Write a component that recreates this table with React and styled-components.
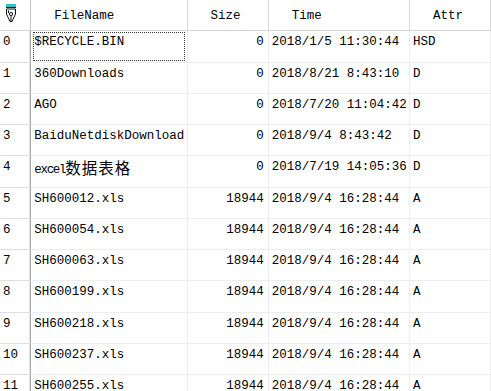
import React from "react";
import styled, { createGlobalStyle } from "styled-components";

const Global = createGlobalStyle`
  html, body { margin: 0; padding: 0; background: #ffffff; overflow: hidden; }
  * { box-sizing: border-box; }
`;

const Viewport = styled.div`
  width: 491px;
  height: 391px;
  overflow: hidden;
  background: #ffffff;
`;

const Grid = styled.div`
  display: grid;
  grid-template-columns: 31.25px 156.25px 81.25px 141.25px 81.25px;
  grid-auto-rows: 31.25px;
  width: 491.25px;
  font-family: "Liberation Mono", "Courier New", monospace;
  font-size: 12.5px;
  line-height: 15px;
  color: #000000;
`;

const HeadCell = styled.div`
  display: flex;
  align-items: flex-start;
  padding: 9px 0 0 ${(p) => (p.$corner ? 0 : 23)}px;
  border-right: 1px solid ${(p) => (p.$corner ? "#c4c4c4" : "#d6d6d6")};
  border-bottom: 1px solid #d2d2d2;
  white-space: nowrap;
  overflow: hidden;
`;

const CornerIcon = styled.div`
  padding: 0 0 0 5px;
  margin-top: -5px;
`;

const RowHead = styled.div`
  padding: 4px 0 0 3px;
  border-right: 1px solid #a8a8a8;
  box-shadow: inset -1px 0 0 #e2e2e2;
  border-bottom: 1px solid #dedede;
  white-space: nowrap;
`;

const Cell = styled.div`
  position: relative;
  padding: 4px 3px 0 3px;
  text-align: ${(p) => (p.$right ? "right" : "left")};
  padding-right: ${(p) => (p.$right ? 4 : 3)}px;
  border-right: 1px solid #ededed;
  border-bottom: 1px solid #ededed;
  white-space: nowrap;
  overflow: hidden;
  ${(p) =>
    p.$focused &&
    `
    &::after {
      content: "";
      position: absolute;
      left: 2px;
      top: 1px;
      right: 2px;
      bottom: 1px;
      border: 1px dotted #3a3a3a;
    }
  `}
`;

const Narrow = styled.span`
  letter-spacing: -1.3px;
`;

const Cjk = styled.span`
  font-family: "Noto Sans CJK SC", sans-serif;
  font-size: 15.5px;
  letter-spacing: 1px;
  vertical-align: -1px;
`;

const PenIcon = () => (
  <svg width="12" height="19" viewBox="0 0 12 19">
    <rect x="1" y="0" width="10" height="3" fill="#2fc4c8" />
    <rect x="1" y="3" width="10" height="1" fill="#111" />
    <path
      d="M1.5 5 L10.5 5 L10.5 10 L7 17.5 L5 17.5 L1.5 10 Z"
      fill="#fff"
      stroke="#111"
      strokeWidth="1"
    />
    <circle cx="6" cy="10" r="1.6" fill="none" stroke="#111" strokeWidth="1" />
    <path d="M6 11.6 L6 17" stroke="#111" strokeWidth="1" />
    <path d="M3.5 6.5 L3.5 9" stroke="#111" strokeWidth="1" />
  </svg>
);

const rows = [
  ["$RECYCLE.BIN", "0", "2018/1/5 11:30:44", "HSD"],
  ["360Downloads", "0", "2018/8/21 8:43:10", "D"],
  ["AGO", "0", "2018/7/20 11:04:42", "D"],
  ["BaiduNetdiskDownload", "0", "2018/9/4 8:43:42", "D"],
  ["excel数据表格", "0", "2018/7/19 14:05:36", "D"],
  ["SH600012.xls", "18944", "2018/9/4 16:28:44", "A"],
  ["SH600054.xls", "18944", "2018/9/4 16:28:44", "A"],
  ["SH600063.xls", "18944", "2018/9/4 16:28:44", "A"],
  ["SH600199.xls", "18944", "2018/9/4 16:28:44", "A"],
  ["SH600218.xls", "18944", "2018/9/4 16:28:44", "A"],
  ["SH600237.xls", "18944", "2018/9/4 16:28:44", "A"],
  ["SH600255.xls", "18944", "2018/9/4 16:28:44", "A"],
];

const renderName = (name) => {
  const m = name.match(/^([A-Za-z]+)([\u4e00-\u9fff]+)$/);
  if (m) {
    return (
      <>
        <Narrow>{m[1]}</Narrow>
        <Cjk>{m[2]}</Cjk>
      </>
    );
  }
  return name;
};

export default function App() {
  return (
    <Viewport>
      <Global />
      <Grid>
        <HeadCell $corner>
          <CornerIcon>
            <PenIcon />
          </CornerIcon>
        </HeadCell>
        <HeadCell>FileName</HeadCell>
        <HeadCell>Size</HeadCell>
        <HeadCell>Time</HeadCell>
        <HeadCell>Attr</HeadCell>
        {rows.map((r, i) => (
          <React.Fragment key={i}>
            <RowHead>{i}</RowHead>
            <Cell $focused={i === 0}>{renderName(r[0])}</Cell>
            <Cell $right>{r[1]}</Cell>
            <Cell>{r[2]}</Cell>
            <Cell>{r[3]}</Cell>
          </React.Fragment>
        ))}
      </Grid>
    </Viewport>
  );
}
